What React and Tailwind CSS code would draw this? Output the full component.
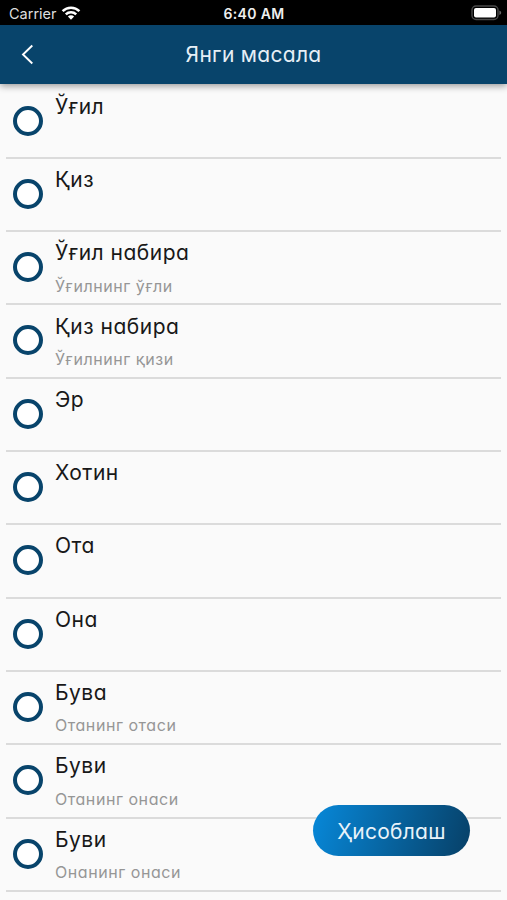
import React from "react";

const heirs = [
  { name: "Ўғил" },
  { name: "Қиз" },
  { name: "Ўғил набира", hint: "Ўғилнинг ўғли" },
  { name: "Қиз набира", hint: "Ўғилнинг қизи" },
  { name: "Эр" },
  { name: "Хотин" },
  { name: "Ота" },
  { name: "Она" },
  { name: "Бува", hint: "Отанинг отаси" },
  { name: "Буви", hint: "Отанинг онаси" },
  { name: "Буви", hint: "Онанинг онаси" },
];

const WifiIcon = () => (
  <svg width="20" height="14" viewBox="0 0 20 14" fill="none" stroke="#fff" strokeWidth="2.5">
    <path d="M1.6 5.2a12 12 0 0 1 16.8 0" />
    <path d="M4.8 8.4a7.4 7.4 0 0 1 10.4 0" />
    <path d="M10 13.8 6.9 10.6a4.4 4.4 0 0 1 6.2 0z" fill="#fff" stroke="none" />
  </svg>
);

const BatteryIcon = () => (
  <svg width="31" height="16" viewBox="0 0 31 16" fill="none">
    <rect x="1" y="1" width="26" height="13.5" rx="4" stroke="#4a4a4a" strokeWidth="1.4" />
    <rect x="3" y="3" width="22" height="9.5" rx="2" fill="#fff" />
    <path d="M28.4 5.5c2.4.8 2.4 3.7 0 4.5z" fill="#666" />
  </svg>
);

const StatusBar = () => (
  <div className="h-[25px] bg-black text-white grid grid-cols-3 items-center pl-[9px] pr-[5px] [font-feature-settings:normal]">
    <div className="flex items-center gap-[5px]">
      <span className="w-[47px] text-[14.5px] leading-none text-[#dedede] pt-[3px]">Carrier</span>
      <WifiIcon />
    </div>
    <div className="text-[14px] leading-none font-semibold text-center text-[#eee] tracking-[0.35px] pt-[3px] pr-[3px] whitespace-nowrap">6:40 AM</div>
    <div className="flex justify-end">
      <BatteryIcon />
    </div>
  </div>
);

const Header = () => (
  <div className="relative z-10 h-[59px] bg-[#08446b] flex items-center justify-center shadow-[0_2px_7px_rgba(0,0,0,0.4)]">
    <svg className="absolute left-[21px] top-[19px]" width="13" height="21" viewBox="0 0 13 21" fill="none" stroke="#fff" strokeWidth="1.9">
      <path d="M11.3 1.5 2 10.5l9.3 9" />
    </svg>
    <h1 className="text-[21px] leading-none text-[#e6eff6] tracking-[0.3px]">Янги масала</h1>
  </div>
);

const HeirRow = ({ name, hint }) => (
  <div className="h-[73.3px] flex border-b-2 border-[#dbdbdb] pl-[7px]">
    <div className="mt-[20px] size-[30px] shrink-0 rounded-full border-[4px] border-[#08446b] bg-white"></div>
    <div className="ml-[12px] flex flex-col whitespace-nowrap">
      <span className="mt-[8.1px] text-[21px] leading-[26px] text-[#181818] tracking-[0.5px]">{name}</span>
      {hint && <span className="mt-[9.3px] text-[16px] leading-[20px] text-[#969696] tracking-[0.55px]">{hint}</span>}
    </div>
  </div>
);

export default function App() {
  return (
    <div className="relative w-[507px] h-[900px] overflow-hidden bg-[#fafafa] font-[Inter,sans-serif] [font-feature-settings:'cv11']">
      <StatusBar />
      <Header />
      <div className="px-[6px] pt-[1.6px]">
        {heirs.map((heir, i) => (
          <HeirRow key={i} {...heir} />
        ))}
      </div>
      <button className="absolute left-[313px] top-[805px] w-[157px] h-[51px] rounded-full bg-linear-[105deg] from-[#0788d9] to-[#074067] text-[21px] leading-none text-[#e9f3fa] tracking-[0.25px] pt-[1px]">
        Ҳисоблаш
      </button>
    </div>
  );
}
